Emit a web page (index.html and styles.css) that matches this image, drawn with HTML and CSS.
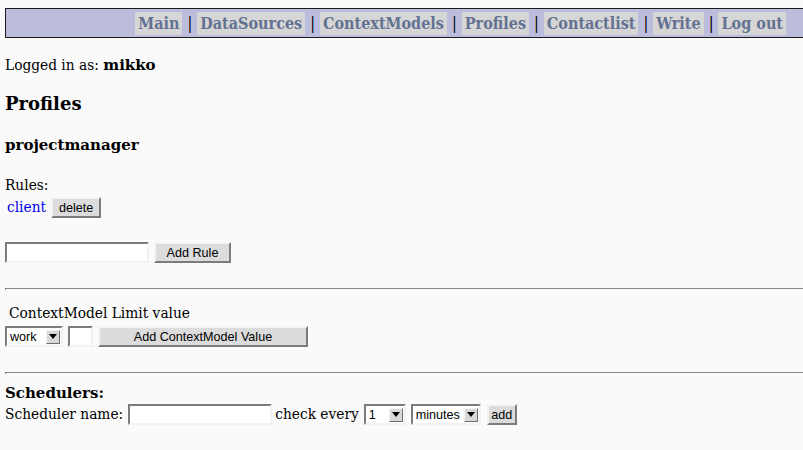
FILE: index.html
```html
<!DOCTYPE html>
<html lang="en">
<head>
    <meta charset="UTF-8">
    <title>Profiles</title>
    <link rel="stylesheet" href="styles.css">
</head>
<body>
    <div class="menu">
        <a href="#" class="menu-link">Main</a> |
        <a href="#" class="menu-link">DataSources</a> |
        <a href="#" class="menu-link">ContextModels</a> |
        <a href="#" class="menu-link">Profiles</a> |
        <a href="#" class="menu-link">Contactlist</a> |
        <a href="#" class="menu-link">Write</a> |
        <a href="#" class="menu-link">Log out</a>
    </div>

    <p class="login">Logged in as: <b>mikko</b></p>

    <h3 class="title">Profiles</h3>
    <h4 class="profile-name">projectmanager</h4>

    <div class="rules">
        <div class="rules-label">Rules:</div>
        <div class="rule-row">
            <a href="#" class="rule-link">client</a>
            <button class="btn">delete</button>
        </div>
    </div>

    <form class="form-row add-rule">
        <input type="text" class="field field-rule">
        <button class="btn btn-rule">Add Rule</button>
    </form>

    <hr class="line">

    <table class="cm-table">
        <tr>
            <td colspan="3" class="cm-label">ContextModel Limit value</td>
        </tr>
        <tr>
            <td>
                <span class="dropdown dd-work">
                    <select class="dropdown-select"><option>work</option></select>
                    <span class="dropdown-arrow"><span class="tri"></span></span>
                </span>
            </td>
            <td><input type="text" class="field field-value"></td>
            <td><button class="btn btn-cm">Add ContextModel Value</button></td>
        </tr>
    </table>

    <hr class="line line-second">

    <h4 class="sched-title">Schedulers:</h4>
    <form class="sched-row">
        <span>Scheduler name:</span>
        <input type="text" class="field field-sched">
        <span class="check">check every</span>
        <span class="dropdown dd-num">
            <select class="dropdown-select"><option>1</option></select>
            <span class="dropdown-arrow"><span class="tri"></span></span>
        </span>
        <span class="dropdown dd-unit">
            <select class="dropdown-select"><option>minutes</option></select>
            <span class="dropdown-arrow"><span class="tri"></span></span>
        </span>
        <button class="btn btn-add">add</button>
    </form>
</body>
</html>
```

FILE: styles.css
```css
body {
    margin: 8px 0 0 5px;
    background-color: #fafafa;
    font-family: 'DejaVu Serif Condensed', 'DejaVu Serif', serif;
    font-stretch: condensed;
    font-size: 15.3px;
    line-height: 19px;
    color: #000;
    overflow: hidden;
}

b,
.title,
.profile-name,
.sched-title {
    font-family: 'DejaVu Serif', serif;
    font-stretch: normal;
    font-weight: bold;
}

b {
    font-size: 15px;
}

.menu {
    margin-right: -10px;
    height: 28px;
    border: 1px solid #1a1a1a;
    background-color: #bcbcdd;
    display: flex;
    justify-content: flex-end;
    align-items: center;
    gap: 5px;
    padding-right: 26px;
    font-size: 16px;
}

.menu-link {
    background-color: #d6d6d6;
    color: #637192;
    text-decoration: none;
    padding: 2px 3px 2px;
    font-weight: bold;
}

.login {
    margin: 18px 0 0;
}

.title {
    font-size: 18px;
    line-height: 22px;
    margin: 18px 0 0;
}

.profile-name {
    font-size: 15px;
    margin: 21px 0 0;
}

.rules {
    margin-top: 21px;
}

.rule-row {
    display: flex;
    align-items: center;
    gap: 5px;
    margin-top: 2px;
}

.rule-link {
    color: #0000ee;
    text-decoration: none;
    padding-left: 2px;
}

.btn {
    font-family: 'Liberation Sans', sans-serif;
    font-stretch: normal;
    font-size: 12.6px;
    background-color: #dcdcdc;
    color: #000;
    border: 2px solid;
    border-color: #f4f4f4 #7c7c7c #7c7c7c #f4f4f4;
    padding: 0;
    height: 21px;
    cursor: pointer;
}

.field {
    font-family: 'Liberation Sans', sans-serif;
    font-size: 12px;
    background-color: #fff;
    border: 2px solid;
    border-color: #7c7c7c #f2f2f2 #f2f2f2 #7c7c7c;
    height: 21px;
    box-sizing: border-box;
    padding: 0 2px;
    margin: 0;
}

.rule-row .btn {
    width: 50px;
}

.form-row {
    display: flex;
    align-items: center;
    gap: 5px;
    margin-top: 24px;
}

.field-rule {
    width: 144px;
}

.btn-rule {
    width: 77px;
}

.line {
    margin: 25px -10px 0 0;
    border: none;
    border-top: 1px solid #888;
    border-left: 1px solid #888;
    height: 1px;
}

.cm-table {
    border-collapse: collapse;
    margin-top: 14px;
    margin-left: 0;
}

.cm-table td {
    padding: 0 5px 0 0;
    vertical-align: middle;
}

.cm-table .cm-label {
    padding: 0 0 3px 4px;
}

.field-value {
    width: 25px;
}

.btn-cm {
    width: 210px;
}

.dropdown {
    display: inline-flex;
    align-items: center;
    height: 21px;
    box-sizing: border-box;
    border: 2px solid;
    border-color: #7c7c7c #f2f2f2 #f2f2f2 #7c7c7c;
    background-color: #fff;
    vertical-align: middle;
}

.dropdown-select {
    appearance: none;
    -webkit-appearance: none;
    border: none;
    background: transparent;
    font-family: 'Liberation Sans', sans-serif;
    font-stretch: normal;
    font-size: 12.6px;
    padding: 0 0 0 3px;
    margin: 0;
    flex: 1;
    min-width: 0;
    outline: none;
}

.dropdown-arrow {
    width: 12px;
    height: 12px;
    background-color: #d8d8d8;
    border: 1px solid;
    border-color: #f4f4f4 #6c6c6c #6c6c6c #f4f4f4;
    display: flex;
    align-items: center;
    justify-content: center;
    margin-right: 1px;
}

.tri {
    width: 0;
    height: 0;
    border-left: 4px solid transparent;
    border-right: 4px solid transparent;
    border-top: 5px solid #000;
}

.dd-work {
    width: 58px;
}

.dd-num {
    width: 42px;
}

.dd-unit {
    width: 70px;
}

.line-second {
    margin-top: 25px;
}

.sched-title {
    font-size: 15px;
    margin: 10px 0 0;
}

.sched-row {
    margin-top: 1px;
    display: flex;
    align-items: center;
}

.field-sched {
    width: 144px;
    margin-left: 5px;
}

.check {
    margin-left: 3px;
}

.dd-num {
    margin-left: 5px;
}

.dd-unit {
    margin-left: 5px;
}

.btn-add {
    width: 30px;
    margin-left: 6px;
}
```
